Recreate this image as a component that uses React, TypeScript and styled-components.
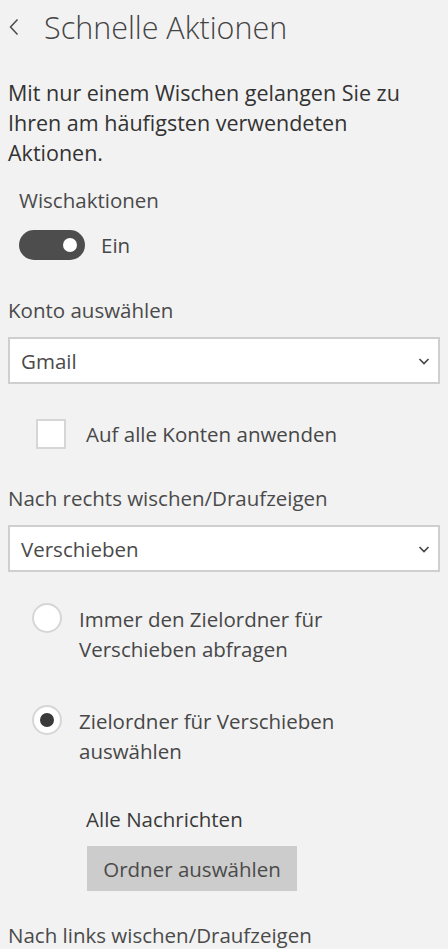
import React, { useState } from 'react';
import styled, { createGlobalStyle } from 'styled-components';

const GlobalStyle = createGlobalStyle`
    html, body {
        margin: 0;
        padding: 0;
        background: #f2f2f2;
    }
    body {
        font-family: 'Open Sans', 'Noto Sans', sans-serif;
        color: #474747;
        -webkit-font-smoothing: antialiased;
    }
`;

const Page = styled.div`
    width: 448px;
    height: 949px;
    overflow: hidden;
    padding: 0 8px;
    box-sizing: border-box;
    background: #f2f2f2;
`;

const Header = styled.div`
    height: 54px;
    display: flex;
    align-items: center;
    margin-bottom: 24px;
`;

const BackButton = styled.button`
    border: 0;
    background: none;
    padding: 0;
    width: 36px;
    height: 30px;
    display: flex;
    align-items: center;
    color: #4a4a4a;
    cursor: pointer;
`;

const Title = styled.h1`
    margin: 0;
    font-size: 30.5px;
    font-weight: 300;
    color: #444;
`;

const Text = styled.p<{ $indent?: number; $top?: number }>`
    margin: ${(p) => p.$top ?? 0}px 0 0 ${(p) => p.$indent ?? 0}px;
    font-size: 20.5px;
    line-height: 30px;
    color: #4a4a4a;
`;

const Description = styled(Text)`
    font-size: 21.5px;
    color: #333;
    padding-right: 20px;
`;

const ToggleRow = styled.label`
    display: flex;
    align-items: center;
    gap: 16px;
    margin: 15px 0 0 11px;
    font-size: 20.5px;
    cursor: pointer;
`;

const ToggleTrack = styled.span<{ $on: boolean }>`
    width: 66px;
    height: 30px;
    border-radius: 15px;
    background: ${(p) => (p.$on ? '#4d4d4d' : 'transparent')};
    border: ${(p) => (p.$on ? 'none' : '2px solid #4d4d4d')};
    display: flex;
    align-items: center;
    justify-content: ${(p) => (p.$on ? 'flex-end' : 'flex-start')};
    padding: 0 8px;
    box-sizing: border-box;
`;

const ToggleKnob = styled.span<{ $on: boolean }>`
    width: 14px;
    height: 14px;
    border-radius: 50%;
    background: ${(p) => (p.$on ? '#fff' : '#4d4d4d')};
`;

const SelectBox = styled.div`
    margin-top: 12px;
    height: 47px;
    border: 2px solid #cfcfcf;
    background: #fff;
    box-sizing: border-box;
    display: flex;
    align-items: center;
    justify-content: space-between;
    padding: 0 6px 0 11px;
    font-size: 20.5px;
    color: #4a4a4a;
`;

const CheckRow = styled.label`
    display: flex;
    align-items: center;
    gap: 20px;
    margin: 35px 0 0 28px;
    font-size: 20.5px;
    line-height: 30px;
`;

const CheckBox = styled.span`
    width: 30px;
    height: 30px;
    box-sizing: border-box;
    border: 2px solid #d6d6d6;
    background: #fff;
`;

const RadioList = styled.div`
    display: flex;
    flex-direction: column;
    gap: 42px;
    margin: 32px 0 0 24px;
`;

const RadioRow = styled.label`
    display: flex;
    align-items: flex-start;
    gap: 17px;
    font-size: 20.5px;
    line-height: 30px;
    padding-right: 70px;
`;

const RadioCircle = styled.span<{ $checked: boolean }>`
    flex: none;
    width: 30px;
    height: 30px;
    margin-top: -1px;
    border-radius: 50%;
    box-sizing: border-box;
    border: 2px solid #d6d6d6;
    background: #fff;
    display: flex;
    align-items: center;
    justify-content: center;
    &::after {
        content: '';
        width: 14px;
        height: 14px;
        border-radius: 50%;
        background: ${(p) => (p.$checked ? '#3a3a3a' : 'transparent')};
    }
`;

const FolderBlock = styled.div`
    margin: 38px 0 0 78px;
    display: flex;
    flex-direction: column;
    align-items: flex-start;
`;

const FolderName = styled.div`
    font-size: 20.5px;
    line-height: 30px;
    color: #3a3a3a;
`;

const GrayButton = styled.button`
    margin-top: 12px;
    margin-left: 1px;
    width: 210px;
    height: 45px;
    border: 0;
    background: #cccccc;
    font-family: inherit;
    font-size: 20.5px;
    color: #4a4a4a;
`;

const Chevron = () => (
    <svg width="16" height="16" viewBox="0 0 16 16">
        <path d="M3.5 6 L8 10.5 L12.5 6" fill="none" stroke="#444" strokeWidth="1.6" />
    </svg>
);

const BackIcon = () => (
    <svg width="14" height="18" viewBox="0 0 14 18">
        <path d="M9.5 1.5 L2.5 9 L9.5 16.5" fill="none" stroke="#4a4a4a" strokeWidth="1.5" />
    </svg>
);

export default function App() {
    const [swipeOn, setSwipeOn] = useState(true);
    const [moveMode, setMoveMode] = useState<'ask' | 'pick'>('pick');

    return (
        <>
            <GlobalStyle />
            <Page>
                <Header>
                    <BackButton aria-label="Zurück">
                        <BackIcon />
                    </BackButton>
                    <Title>Schnelle Aktionen</Title>
                </Header>
                <Description>Mit nur einem Wischen gelangen Sie zu Ihren am häufigsten verwendeten Aktionen.</Description>
                <Text $indent={11} $top={17}>
                    Wischaktionen
                </Text>
                <ToggleRow onClick={() => setSwipeOn(!swipeOn)}>
                    <ToggleTrack $on={swipeOn}>
                        <ToggleKnob $on={swipeOn} />
                    </ToggleTrack>
                    {swipeOn ? 'Ein' : 'Aus'}
                </ToggleRow>
                <Text $top={35}>Konto auswählen</Text>
                <SelectBox>
                    Gmail
                    <Chevron />
                </SelectBox>
                <CheckRow>
                    <CheckBox />
                    Auf alle Konten anwenden
                </CheckRow>
                <Text $top={34}>Nach rechts wischen/Draufzeigen</Text>
                <SelectBox>
                    Verschieben
                    <Chevron />
                </SelectBox>
                <RadioList>
                    <RadioRow onClick={() => setMoveMode('ask')}>
                        <RadioCircle $checked={moveMode === 'ask'} />
                        Immer den Zielordner für Verschieben abfragen
                    </RadioRow>
                    <RadioRow onClick={() => setMoveMode('pick')}>
                        <RadioCircle $checked={moveMode === 'pick'} />
                        Zielordner für Verschieben auswählen
                    </RadioRow>
                </RadioList>
                <FolderBlock>
                    <FolderName>Alle Nachrichten</FolderName>
                    <GrayButton>Ordner auswählen</GrayButton>
                </FolderBlock>
                <Text $top={29}>Nach links wischen/Draufzeigen</Text>
            </Page>
        </>
    );
}
